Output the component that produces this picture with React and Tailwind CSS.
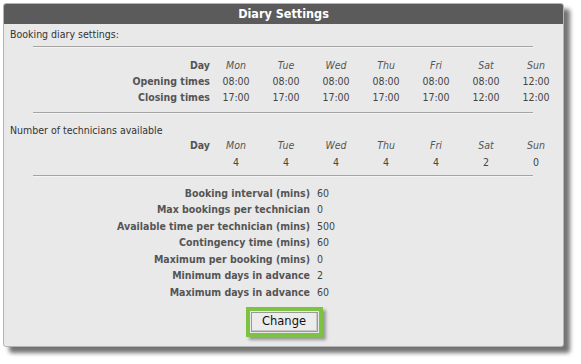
import React from 'react';

const days = ['Mon', 'Tue', 'Wed', 'Thu', 'Fri', 'Sat', 'Sun'];
const opening = ['08:00', '08:00', '08:00', '08:00', '08:00', '08:00', '12:00'];
const closing = ['17:00', '17:00', '17:00', '17:00', '17:00', '12:00', '12:00'];
const technicians = ['4', '4', '4', '4', '4', '2', '0'];

const settings = [
  ['Booking interval (mins)', '60'],
  ['Max bookings per technician', '0'],
  ['Available time per technician (mins)', '500'],
  ['Contingency time (mins)', '60'],
  ['Maximum per booking (mins)', '0'],
  ['Minimum days in advance', '2'],
  ['Maximum days in advance', '60'],
];

function DayRow({ label, values, italic = false }) {
  return (
    <div className="grid grid-cols-[207px_repeat(7,50px)] h-[16.3px] items-center">
      <div className="text-right pr-px font-bold text-[#555]">{label}</div>
      {values.map((v, i) => (
        <div key={i} className={`text-center ${italic ? 'italic text-[#555]' : 'text-[#444]'}`}>
          {v}
        </div>
      ))}
    </div>
  );
}

function Rule() {
  return <div className="ml-[29px] w-[500px] h-px bg-[#a4a4a4] border-b border-[#f4f4f4] box-content" />;
}

export default function App() {
  return (
    <div className="w-[581px] h-[364px] bg-white pt-[3px] pl-[3px] font-['DejaVu_Sans_Condensed','DejaVu_Sans',sans-serif] text-[10.5px] leading-none">
      <div className="w-[561px] h-[344px] bg-[#e9e9e9] border border-[#b4b4b4] rounded-[3px] shadow-[6px_6px_4px_rgba(0,0,0,0.55)] overflow-hidden flex flex-col">
        <div className="h-[20px] bg-[#5b5b5b] flex items-center justify-center text-white font-bold text-[12.5px]">
          Diary Settings
        </div>
        <div className="h-[18px] flex items-center pl-[6px] text-[#333] mt-[1px]">Booking diary settings:</div>
        <div className="mt-[3px]"><Rule /></div>
        <div className="mt-[9px]">
          <DayRow label="Day" values={days} italic />
          <DayRow label="Opening times" values={opening} />
          <DayRow label="Closing times" values={closing} />
        </div>
        <div className="mt-[6px]"><Rule /></div>
        <div className="h-[14px] flex items-center pl-[6px] text-[#333] mt-[9.7px]">Number of technicians available</div>
        <div>
          <DayRow label="Day" values={days} italic />
          <DayRow label="" values={technicians} />
        </div>
        <div className="mt-[5px]"><Rule /></div>
        <div className="mt-[7.75px] flex flex-col">
          {settings.map(([label, value]) => (
            <div key={label} className="flex h-[16.5px] items-center">
              <div className="w-[306px] text-right font-bold text-[#555]">{label}</div>
              <div className="pl-[7px] text-[#444]">{value}</div>
            </div>
          ))}
        </div>
        <div className="mt-[6.5px] flex justify-center pl-px">
          <div className="border-[4px] border-[#7dc242] p-px shadow-[3px_3px_3px_rgba(0,0,0,0.35)]">
            <button className="block w-[67px] h-[20px] bg-[#ececec] border border-[#9a9a9a] shadow-[inset_-1px_-1px_0_#c8c8c8] text-[11.5px] leading-none text-[#111] font-['DejaVu_Sans','Verdana',sans-serif]">
              Change
            </button>
          </div>
        </div>
      </div>
    </div>
  );
}
